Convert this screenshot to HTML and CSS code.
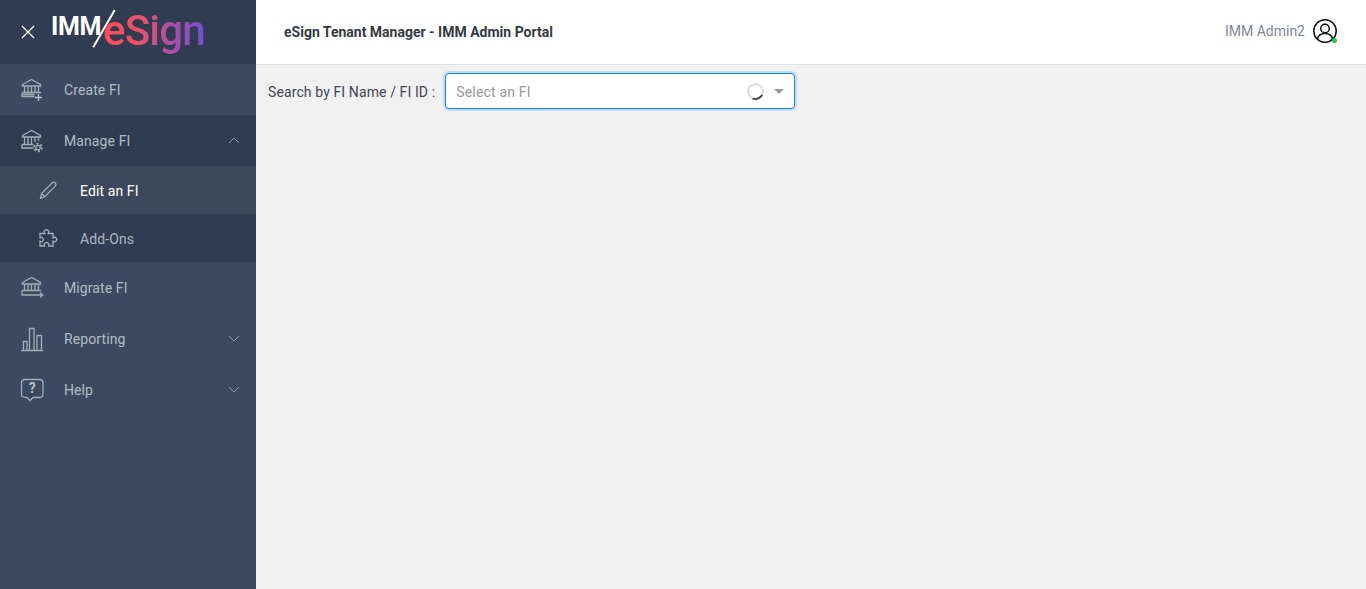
FILE: index.html
```html
<!DOCTYPE html>
<html lang="en">
<head>
<meta charset="utf-8">
<title>eSign Tenant Manager - IMM Admin Portal</title>
<link rel="stylesheet" href="styles.css">
</head>
<body>
<div class="app">
  <aside class="sidebar">
    <div class="brand">
      <svg class="close" width="16" height="16" viewBox="0 0 16 16"><path d="M2 2l12 12M14 2L2 14" stroke="#fff" stroke-width="1.3" fill="none"/></svg>
      <div class="logo">
        <span class="logo-imm">IMM</span>
        <span class="logo-slash"></span>
        <span class="logo-esign">eSign</span>
      </div>
    </div>
    <nav class="menu">
      <a class="item">
        <svg class="ico" width="26" height="26" viewBox="0 0 26 26"><g class="st"><path d="M3.500 7.500L12.500 2.500 21.500 7.500V9H3.500zM5.500 9v6M9 9v6M12.500 9v6M16 9v6M19.500 9v6M3.500 15.500h18v-.5M3 15.500v4h12.500M3 17.500h12.500"/><path class="bright" d="M19.500 17v7M16 20.500h7"/></g></svg>
        <span class="label">Create FI</span>
      </a>
      <a class="item dark">
        <svg class="ico" width="26" height="26" viewBox="0 0 26 26"><g class="st"><path d="M3.500 7.500L12.500 2.500 21.500 7.500V9H3.500zM5.500 9v7M9 9v7M12.500 9v7M16 9v5M19.500 9v4M3 16.500h11.500M3 16.500v3.500h11.500"/><circle cx="19" cy="19.500" r="2.200"/><circle class="teeth" cx="19" cy="19.500" r="3.800"/></g></svg>
        <span class="label">Manage FI</span>
        <svg class="chev" width="12" height="7" viewBox="0 0 12 7"><path d="M1 6l5-5 5 5"/></svg>
      </a>
      <div class="sub">
        <a class="subitem active">
          <svg class="ico" width="20" height="20" viewBox="0 0 20 20"><g class="st"><path d="M2.500 18.300l1-4.800L14.200 2.800c.8-.8 1.900-.8 2.600-.1l.6.6c.7.800.7 1.900-.1 2.600L6.900 16.800z M3.500 13.500l3.400 3.300"/></g></svg>
          <span class="label">Edit an FI</span>
        </a>
        <a class="subitem">
          <svg class="ico" width="20" height="20" viewBox="0 0 20 20"><g class="st"><path d="M2 5.500h4.800c-.9-1.100-.8-2.300 0-3 .9-.8 2.500-.8 3.400 0 .8.700.8 1.900 0 3H15v4.300c1-.7 2.100-.7 2.900 0 .9.900.9 2.500 0 3.400-.8.700-1.900.7-2.900 0V18h-4.300c.6-1 .5-2.100-.3-2.800-1-.8-2.700-.8-3.700 0-.7.700-.8 1.800-.2 2.800H2v-4.600c1 .6 2 .5 2.600-.2.800-.9.800-2.400 0-3.300-.6-.7-1.600-.8-2.600-.2z"/></g></svg>
          <span class="label">Add-Ons</span>
        </a>
      </div>
      <a class="item">
        <svg class="ico" width="26" height="26" viewBox="0 0 26 26"><g class="st"><path d="M3.500 7.500L12.500 2.500 21.500 7.500V9H3.500zM5.500 9v6M9 9v6M12.500 9v6M16 9v6M19.500 9v6M3 15.500h19M3 15.500v4.500h20.500M21 17.500l2.800 2.500-2.800 2.500"/></g></svg>
        <span class="label">Migrate FI</span>
      </a>
      <a class="item">
        <svg class="ico" width="26" height="26" viewBox="0 0 26 26"><g class="st"><path d="M2 24.500h22M4.500 24.500v-9h3.500v9M10.500 24.500V2.500h4.500v22M18 24.500v-15h4.500v15"/></g></svg>
        <span class="label">Reporting</span>
        <svg class="chev" width="12" height="7" viewBox="0 0 12 7"><path d="M1 1l5 5 5-5"/></svg>
      </a>
      <a class="item">
        <svg class="ico" width="26" height="26" viewBox="0 0 26 26"><path class="st-p" d="M6.500 2.500h14c2.200 0 3.500 1.300 3.500 3.500v11c0 2.200-1.300 3.500-3.500 3.500h-6.500l-3 3-3-3H6.500C4.300 20.500 2.500 19.200 2.500 17V6c0-2.200 1.800-3.500 4-3.500z"/><text class="q" x="13.300" y="16.300" text-anchor="middle">?</text></svg>
        <span class="label">Help</span>
        <svg class="chev" width="12" height="7" viewBox="0 0 12 7"><path d="M1 1l5 5 5-5"/></svg>
      </a>
    </nav>
  </aside>
  <div class="main">
    <header class="topbar">
      <h1 class="title">eSign Tenant Manager - IMM Admin Portal</h1>
      <div class="user">
        <span class="user-name">IMM Admin2</span>
        <span class="avatar">
          <svg width="26" height="26" viewBox="0 0 26 26"><g fill="none" stroke="#111" stroke-width="1.500"><circle cx="13" cy="13" r="11.200"/><circle cx="13" cy="10.500" r="4.300"/><path d="M5.500 21c.6-3.500 3.200-5.500 7.500-5.500s6.900 2 7.500 5.500"/></g></svg>
          <span class="status"></span>
        </span>
      </div>
    </header>
    <section class="content">
      <div class="search">
        <label class="search-label">Search by FI Name / FI ID :</label>
        <div class="select">
          <span class="placeholder">Select an FI</span>
          <span class="spinner"></span>
          <span class="caret"></span>
        </div>
      </div>
    </section>
  </div>
</div>
</body>
</html>
```
FILE: styles.css
```css
* { box-sizing: border-box; }
html, body { margin: 0; height: 100%; }
body { font-family: Roboto, "Liberation Sans", sans-serif; font-size: 14px; color: #343a40; }
.app { display: flex; height: 589px; overflow: hidden; }

.sidebar { width: 256px; flex: none; background: #3b4a60; }
.brand { height: 64px; background: #303c52; display: flex; align-items: center; padding-left: 20px; }
.close { flex: none; }
.logo { position: relative; margin-left: 15px; height: 64px; width: 160px; }
.logo-imm { position: absolute; left: 0; top: 11px; font: 700 25px/32px Roboto, sans-serif; letter-spacing: -0.4px; color: #fff; }
.logo-slash { position: absolute; left: 51.500px; top: 7px; width: 1.500px; height: 43px; background: #fff; transform: rotate(30deg); transform-origin: center; }
.logo-esign { position: absolute; left: 52px; top: 6px; font: 500 42px/50px Roboto, sans-serif; letter-spacing: -0.8px; background: linear-gradient(90deg, #ff4b55 0%, #ef5068 35%, #b14f9f 65%, #6f50d0 100%); -webkit-background-clip: text; background-clip: text; color: transparent; }

.item { height: 51px; display: flex; align-items: center; padding-left: 19px; color: #b2bac5; }
.item.dark { background: #303c52; }
.item .ico { flex: none; width: 26px; height: 26px; }
.label { letter-spacing: 0.1px; }
.item .label { margin-left: 19px; flex: 1; }
.chev { flex: none; margin-right: 16px; fill: none; stroke: #8b95a4; stroke-width: 1; }
.sub { background: #303c52; }
.subitem { height: 48px; display: flex; align-items: center; padding-left: 38px; color: #aeb6c1; }
.subitem .label { margin-left: 22px; padding-top: 2px; }
.subitem.active { background: #3c485b; color: #fff; }
.st, .st-p { fill: none; stroke: #a3acb9; stroke-width: 1.300; }
.bright { stroke: #b8c0ca; }
.teeth { stroke-dasharray: 2 1.980; stroke-width: 2; }
.q { font: 700 14px Roboto, sans-serif; fill: #b8c0ca; }

.main { flex: 1; display: flex; flex-direction: column; min-width: 0; background: #f1f1f1; }
.topbar { height: 65px; flex: none; background: #fff; border-bottom: 1px solid #dcdfe3; display: flex; align-items: center; justify-content: space-between; padding: 0 28px; }
.title { margin: 0; font-size: 14px; font-weight: 700; color: #343a40; }
.user { display: flex; align-items: center; gap: 7px; margin-top: -2px; }
.user-name { color: #7d8794; }
.avatar { position: relative; width: 26px; height: 26px; display: block; }
.avatar svg { display: block; }
.status { position: absolute; right: 1px; bottom: 1px; width: 5px; height: 5px; border-radius: 50%; background: #22c55e; }

.content { padding: 8px 12px; }
.search { display: flex; align-items: center; gap: 10px; }
.search-label { color: #3f4650; letter-spacing: 0.11px; padding-top: 2px; }
.select { width: 350px; height: 36px; background: #fff; border: 1px solid #0a84ff; border-radius: 4px; box-shadow: 0 0 0 2px rgba(0, 123, 255, 0.18); display: flex; align-items: center; padding: 0 10px; }
.placeholder { flex: 1; color: #999; letter-spacing: 0.17px; padding-top: 2px; }
.spinner { width: 17px; height: 17px; border-radius: 50%; border: 2px solid #dcdcdc; border-bottom-color: #444; transform: rotate(-20deg); margin-right: 10px; }
.caret { width: 0; height: 0; border-left: 5px solid transparent; border-right: 5px solid transparent; border-top: 5px solid #999; }
```
